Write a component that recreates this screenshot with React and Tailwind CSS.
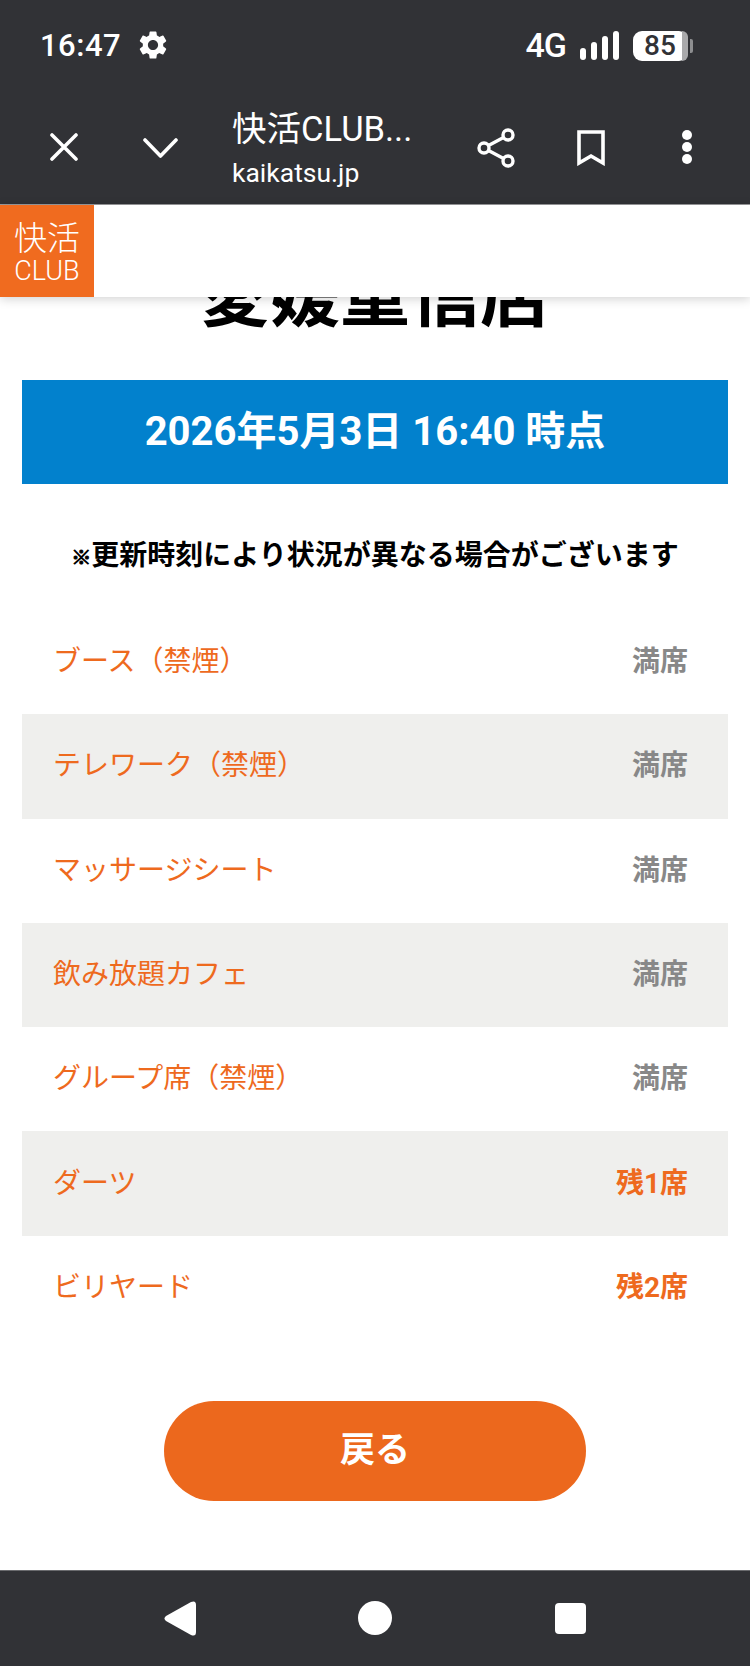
import React from 'react';
import { MdSettings } from 'react-icons/md';

const JP = "font-['Roboto','Noto_Sans_CJK_JP',sans-serif]";

const rows = [
  { name: 'ブース（禁煙）', status: '満席' },
  { name: 'テレワーク（禁煙）', status: '満席' },
  { name: 'マッサージシート', status: '満席' },
  { name: '飲み放題カフェ', status: '満席' },
  { name: 'グループ席（禁煙）', status: '満席' },
  { name: 'ダーツ', status: '残1席', left: true },
  { name: 'ビリヤード', status: '残2席', left: true },
];

const StatusBar = () => (
  <div className="h-[90px] pl-[40px] pr-[62px] pt-[25px] flex justify-between items-start text-white">
    <div className="flex items-center gap-[15px] h-[40px]">
      <span className="text-[31px] font-medium leading-none tracking-[0.5px]">16:47</span>
      <MdSettings className="w-[34px] h-[34px]" />
    </div>
    <div className="flex items-center h-[40px]">
      <span className="text-[34px] font-medium leading-none tracking-[-1px]">4G</span>
      <svg className="ml-[14px]" width="39" height="29" viewBox="0 0 39 29" fill="white">
        <rect x="0" y="17" width="6" height="12" rx="3" />
        <rect x="11" y="11" width="6" height="18" rx="3" />
        <rect x="22" y="5" width="6" height="24" rx="3" />
        <rect x="33" y="0" width="6" height="29" rx="3" />
      </svg>
      <div className="relative ml-[14px] mt-[1px] w-[55px] h-[30px] rounded-[9px] bg-white text-[#313236] flex items-center pl-[11px] overflow-visible">
        <span className="text-[28px] font-medium leading-none">85</span>
        <div className="absolute right-0 top-0 w-[6px] h-[30px] rounded-r-[8px] bg-[#a9a9ab]" />
        <div className="absolute right-[-5px] top-[8px] w-[3px] h-[14px] rounded-r-[2px] bg-[#8d8e90]" />
      </div>
    </div>
  </div>
);

const ToolBar = () => (
  <div className="h-[115px] relative flex items-start text-white border-b border-[#9a9a9c]">
    <svg className="mt-[43px] ml-[50px]" width="28" height="28" viewBox="0 0 28 28" fill="none" stroke="white" strokeWidth="3.6" strokeLinecap="round">
      <path d="M2 2 L26 26 M26 2 L2 26" />
    </svg>
    <svg className="mt-[48px] ml-[65px]" width="35" height="20" viewBox="0 0 35 20" fill="none" stroke="white" strokeWidth="3.6" strokeLinecap="round" strokeLinejoin="round">
      <path d="M2 2 L17.5 18 L33 2" />
    </svg>
    <div className="ml-[54px] mt-[16px] flex flex-col">
      <span className="text-[34.500px] leading-[46px] font-normal whitespace-nowrap">快活CLUB...</span>
      <span className="text-[26.500px] leading-[38px] font-normal mt-[2px]">kaikatsu.jp</span>
    </div>
    <svg className="absolute left-[477px] top-[38px]" width="38" height="40" viewBox="0 0 38 40" fill="none" stroke="white" strokeWidth="3.4">
      <circle cx="31" cy="7" r="5" />
      <circle cx="7" cy="20" r="5" />
      <circle cx="31" cy="33" r="5" />
      <path d="M11.5 17.5 L26.5 9.5 M11.5 22.5 L26.5 30.5" />
    </svg>
    <svg className="absolute left-[577px] top-[40px]" width="28" height="36" viewBox="0 0 28 36" fill="none" stroke="white" strokeWidth="3.6">
      <path d="M2 2 H26 V33 L14 26 L2 33 Z" />
    </svg>
    <div className="absolute left-[682px] top-[40px] flex flex-col gap-[2.500px]">
      <div className="w-[10px] h-[9.500px] rounded-full bg-white" />
      <div className="w-[10px] h-[9.500px] rounded-full bg-white" />
      <div className="w-[10px] h-[9.500px] rounded-full bg-white" />
    </div>
  </div>
);

const NavBar = () => (
  <div className="h-[96px] bg-[#313236] border-t border-[#6a6b6e] relative">
    <svg className="absolute left-[164px] top-[30px]" width="32" height="35" viewBox="0 0 32 35" fill="white">
      <path d="M27 1 Q32 -1 32 4 V31 Q32 36 27 34 L2 20 Q-1 17.500 2 15 Z" />
    </svg>
    <div className="absolute left-[358px] top-[30px] w-[34px] h-[34px] rounded-full bg-white" />
    <div className="absolute left-[555px] top-[32px] w-[31px] h-[31px] rounded-[4px] bg-white" />
  </div>
);

export default function App() {
  return (
    <div className={`w-[750px] h-[1666px] flex flex-col bg-white overflow-hidden ${JP}`}>
      <div className="bg-[#313236]">
        <StatusBar />
        <ToolBar />
      </div>

      <header className="h-[92px] bg-white flex shadow-[0_2px_10px_rgba(0,0,0,0.18)] relative z-10">
        <div className="w-[94px] bg-[#f06b1f] text-white flex flex-col items-center pt-[14px]">
          <span className="text-[33px] leading-[40px] font-light">快活</span>
          <span className="text-[27px] leading-[26px] font-light -mt-[1px]">CLUB</span>
        </div>
      </header>

      <main className="flex-1 overflow-hidden px-[22px]">
        <h1 className="-mt-[45px] h-[128px] text-center text-[70px] leading-[90px] font-bold text-black">愛媛重信店</h1>

        <div className="h-[104px] bg-[#0281cd] text-white flex items-center justify-center text-[40px] font-bold">
          2026年5月3日 16:40 時点
        </div>

        <p className="mt-[52px] h-[40px] text-center text-[28px] leading-[40px] font-bold text-black">
          <span className="text-[20px] font-black [-webkit-text-stroke:1px_black]">※</span>更新時刻により状況が異なる場合がございます
        </p>

        <ul className="mt-[34px]">
          {rows.map((row, i) => (
            <li
              key={row.name}
              className={`h-[104.3px] pl-[31px] pr-[40px] flex items-center justify-between text-[28px] ${i % 2 === 1 ? 'bg-[#efefed]' : ''}`}
            >
              <span className="text-[#ee6a1e]">{row.name}</span>
              <span className={`font-bold ${row.left ? 'text-[#ee6a1e]' : 'text-[#888888]'}`}>{row.status}</span>
            </li>
          ))}
        </ul>

        <button className="block mx-auto mt-[61px] w-[422px] h-[100px] rounded-full bg-[#ec681d] text-white text-[35px] font-bold">
          戻る
        </button>
      </main>

      <NavBar />
    </div>
  );
}
